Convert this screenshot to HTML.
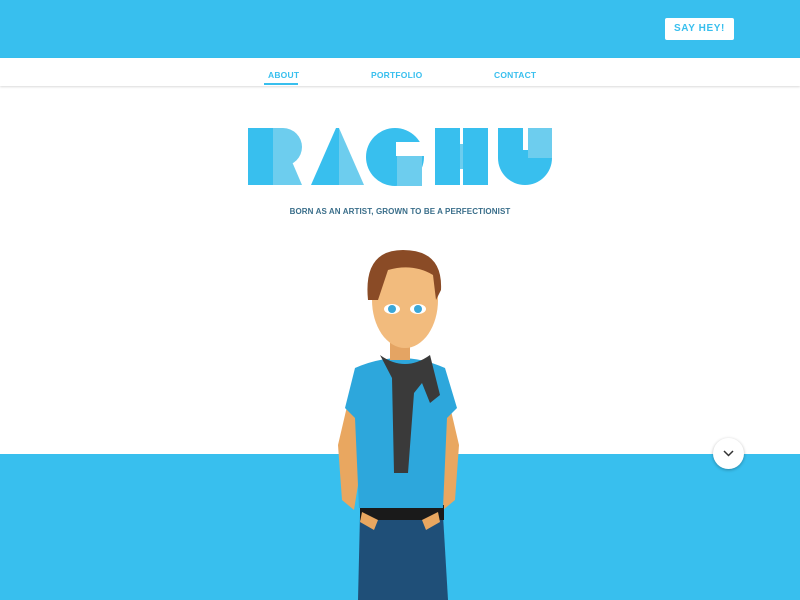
<!DOCTYPE html>
<html><head><meta charset="utf-8"><style>
*{margin:0;padding:0;box-sizing:border-box}
body{width:800px;height:600px;overflow:hidden;background:#fff;font-family:"Liberation Sans",sans-serif;position:relative}
.top{position:absolute;left:0;top:0;width:800px;height:58px;background:#38bfee}
.btn{position:absolute;left:665px;top:18px;width:69px;height:22px;background:#fff;border-radius:2px;color:#38bfee;font-size:10px;font-weight:bold;letter-spacing:.6px;text-align:center;line-height:22px}
.nav{position:absolute;top:58px;left:0;width:800px;height:28px;background:#fff;box-shadow:0 1px 2px rgba(0,0,0,.15)}
.nav span{position:absolute;top:12px;font-size:8.5px;font-weight:bold;color:#38bfee;letter-spacing:.2px}
.ul{position:absolute;left:264px;top:83px;width:34px;height:2px;background:#38bfee}
.tag{position:absolute;top:207px;left:0;width:800px;text-align:center;font-size:8px;font-weight:bold;color:#3a6e8a;letter-spacing:.1px}
.band{position:absolute;left:0;top:454px;width:800px;height:146px;background:#38bfee}
.down{position:absolute;left:713px;top:438px;width:31px;height:31px;border-radius:50%;background:#fff;box-shadow:0 1px 3px rgba(0,0,0,.3)}
</style></head><body>
<div class="top"><div class="btn">SAY HEY!</div></div>
<div class="nav"><span style="left:268px">ABOUT</span><span style="left:371px">PORTFOLIO</span><span style="left:494px">CONTACT</span></div>
<div class="ul"></div>
<svg style="position:absolute;left:0;top:0" width="800" height="600">
<g fill="#38bfee">
<rect x="248" y="128" width="25" height="57"/>
<path d="M273 128h10a19 19 0 0 1 0 38h-10z" fill="#6dcdee"/>
<path d="M273 150l14 0 15 35h-29z" fill="#6dcdee"/>
<path d="M311 185l25-57h3v57z"/>
<path d="M339 128l25 57h-25z" fill="#6dcdee"/>
<circle cx="395" cy="157" r="29"/>
<rect x="396" y="142" width="30" height="14" fill="#fff"/>
<rect x="397" y="156" width="25" height="30" fill="#6dcdee"/>
<rect x="435" y="128" width="25" height="57"/>
<rect x="463" y="128" width="25" height="57"/>
<rect x="460" y="144" width="3" height="25" fill="#6dcdee"/>
<path d="M498 128v30a27 27 0 0 0 54 0v-30h-24v22h-5v-22z"/>
<rect x="528" y="128" width="24" height="30" fill="#6dcdee"/>
</g>
</svg>
<div class="tag">BORN AS AN ARTIST, GROWN TO BE A PERFECTIONIST</div>
<div class="band"></div>
<svg style="position:absolute;left:0;top:0" width="800" height="600">
<path d="M352 385l-14 60 4 55 12 10 8-50z" fill="#e9a760"/>
<path d="M445 385l14 60-4 55-12 10-8-50z" fill="#e9a760"/>
<path d="M360 515l-2 85h90l-5-85z" fill="#1f4f78"/>
<path d="M360 505h84v15h-84z" fill="#1a1a1a"/>
<path d="M355 368q45-20 90 0l12 40-10 10-4 90h-84l-4-90-10-10z" fill="#2da7dc"/>
<rect x="390" y="335" width="20" height="25" fill="#e4a463"/>
<ellipse cx="405" cy="300" rx="33" ry="48" fill="#f2bb7d"/>
<path d="M368 300q-5-50 35-50 40 0 38 40l-5 10-3-25q-20-12-45-5l-10 30z" fill="#8a4b26"/>
<ellipse cx="392" cy="309" rx="8" ry="5" fill="#fff"/><circle cx="392" cy="309" r="4" fill="#3aa7d8"/>
<ellipse cx="418" cy="309" rx="8" ry="5" fill="#fff"/><circle cx="418" cy="309" r="4" fill="#3aa7d8"/>
<path d="M380 355q25 18 50 0l10 40-10 8-8-20-8 10-6 80h-14l-2-95z" fill="#3a3a3a"/>
<path d="M362 512l16 8-4 10-14-8zM438 512l-16 8 4 10 14-8z" fill="#e9a760"/>
</svg>
<div class="down"><svg width="31" height="31"><path d="M11 13l4.5 4.5L20 13" fill="none" stroke="#333" stroke-width="1.5"/></svg></div>
</body></html>
